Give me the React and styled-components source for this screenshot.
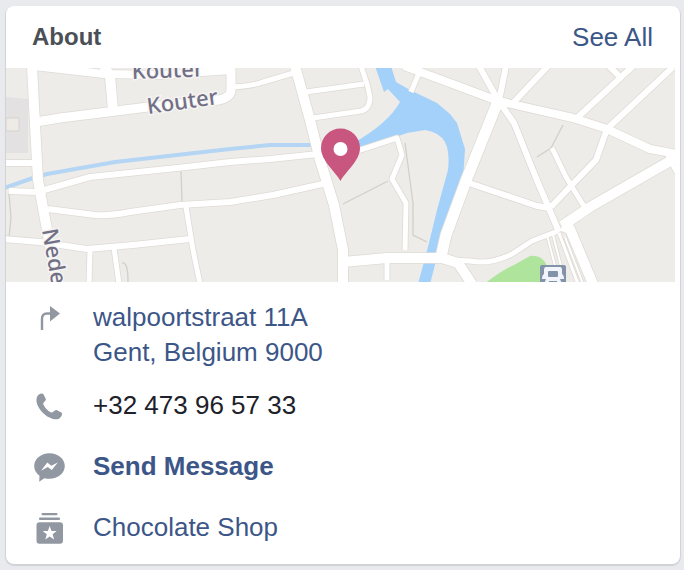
import styled, { createGlobalStyle } from "styled-components";

const GlobalStyle = createGlobalStyle`
  * {
    box-sizing: border-box;
  }
  body {
    margin: 0;
    background-color: #e9eaee;
    font-family: "Liberation Sans", Arial, Helvetica, sans-serif;
  }
`;

const Page = styled.main`
  padding: 6px 4px 6px 6px;
`;

const Card = styled.section`
  background-color: white;
  border-radius: 8px;
  box-shadow: 0 1px 1px 1px #d0d2d7;
  overflow: hidden;
`;

const Header = styled.header`
  display: flex;
  align-items: center;
  justify-content: space-between;
  height: 62px;
  padding: 0 27px 0 26px;
`;

const Title = styled.h2`
  margin: 0;
  font-size: 24px;
  font-weight: 700;
  color: #4b4f56;
`;

const Link = styled.a`
  font-size: 26px;
  line-height: 35px;
  font-weight: ${(props) => (props.$strong ? 700 : 400)};
  color: #3c5688;
  text-decoration: none;
`;

const Map = styled.svg`
  display: block;
  width: calc(100% - 5px);
  height: 214px;
`;

const Label = styled.text`
  font-family: "Noto Sans", sans-serif;
  font-size: 22px;
  font-weight: 500;
  fill: #716f86;
  stroke: #f6f4f2;
  stroke-width: 3px;
  paint-order: stroke;
`;

const List = styled.ul`
  margin: 0;
  padding: 5px 0 6px;
  list-style: none;
`;

const Row = styled.li`
  display: flex;
  gap: 27px;
  padding: 13px 28px;
  padding-bottom: ${(props) => (props.$tight ? 5 : 13)}px;
  font-size: 26px;
  line-height: 35px;
`;

const Icon = styled.svg`
  flex-shrink: 0;
  width: 32px;
  height: 35px;
  fill: #9298a2;
`;

const Phone = styled.span`
  color: #1d2129;
`;

const roads = [
  { w: 10, d: "M32 66 L35 125 L38 180 L43 208 L57 284" },
  { w: 9, d: "M36 122 L60 118 L100 113 L148 107 L190 103 L219 100 Q231 97 231 90 V66" },
  { w: 10, d: "M104 66 L110 76 L113 110" },
  { w: 8, d: "M34 66 L104 74 L160 75 L231 70" },
  { w: 6, d: "M4 163 H34" },
  { w: 6, d: "M9 191 L37 192 L90 177 L177 168 L230 162 L270 159 L318 154" },
  { w: 6, d: "M48 209 L95 215 Q110 216 130 212 L180 205 L230 202 L273 195 L327 183" },
  { w: 6, d: "M4 239 L40 242 L87 249 L133 245 L190 239" },
  { w: 5, d: "M90 249 L89 284" },
  { w: 5, d: "M114 248 L119 284" },
  { w: 5, d: "M186 207 L193 250 L200 284" },
  { w: 10, d: "M295 66 L310 120 L320 160 L334 205 L343 250 V284" },
  { w: 5, d: "M233 87 Q252 86 263 82 L297 72" },
  { w: 5, d: "M306 92 L364 84" },
  { w: 5, d: "M361 66 L367 84 L370 97 Q370 109 361 111 L313 118" },
  { w: 5, d: "M354 152 L397 138 L402 155 L392 179 L406 203 L405 250" },
  { w: 10, d: "M343 262 L387 258 L442 258 L458 263 L472 284" },
  { w: 5, d: "M387 258 V280" },
  { w: 8, d: "M404 66 L450 83 L498 101 L573 118 L607 129 L650 149 L677 154" },
  { w: 5, d: "M419 73 L411 92" },
  { w: 6, d: "M479 66 L498 100" },
  { w: 6, d: "M506 66 L499 101" },
  { w: 6, d: "M548 66 L514 102" },
  { w: 6, d: "M609 66 L621 78" },
  { w: 6, d: "M633 66 L577 118" },
  { w: 6, d: "M673 67 L608 128" },
  { w: 11, d: "M498 101 L467 178 L446 235 L441 257" },
  { w: 6, d: "M500 103 L514 123 L536 178 L559 232" },
  { w: 6, d: "M607 129 L596 160 L567 190 L551 207" },
  { w: 5, d: "M552 148 L566 177 L585 208" },
  { w: 6, d: "M469 183 L537 206 L550 208" },
  { w: 10, d: "M562 226 L590 207 L677 157" },
  { w: 10, d: "M562 226 L570 229 L593 284" },
  { w: 5, d: "M558 231 L532 241 L512 254 Q490 265 470 261 L450 260" },
  { w: 4, d: "M667 154 L677 174" },
  { w: 2, d: "M547 235 L555 266" },
  { w: 2, d: "M553 235 L561 266" },
  { w: 3, d: "M559 233 L578 284" },
  { w: 2, d: "M565 237 L583 284" },
];

const paths = [
  "M181 171 L182 202",
  "M343 204 L388 181",
  "M405 143 L413 203 V235 L427 242",
  "M563 125 L551 148 L537 157",
  "M9 193 L11 218 L9 238",
  "M122 263 Q128 261 128 282",
];

function AboutMap() {
  return (
    <Map
      viewBox="6 68 669 214"
      preserveAspectRatio="xMidYMid slice"
      role="img"
      aria-label="Map of Gent"
    >
      <rect x="-400" y="68" width="1500" height="214" fill="#eeece8" />
      {/* buildings and park */}
      <path d="M6 97 L28 99 V153 H6 Z" fill="#e3e1e1" />
      <path d="M6 118 H19 V131 H6 Z" fill="#eeebe6" stroke="#d5d2d0" />
      <path
        d="M484 284 Q504 269 514 265 L530 256 Q542 254 547 266 V284 Z"
        fill="#afe49d"
      />
      {/* footpaths */}
      {paths.map((d) => (
        <path key={d} d={d} fill="none" stroke="#d3cfcb" strokeWidth="1.3" />
      ))}
      {/* water */}
      <path
        d="M4 188 L33 178 L47 174 L115 162 L230 149 L270 145 L312 145"
        fill="none"
        stroke="#b4d5f3"
        strokeWidth="4"
      />
      <path
        d="M375 66 L384 92 L388 89 L400 102 Q388 124 350 145 L354 152 L407 133 L425 130 Q439 132 445 142 Q450 152 448 170 L437 210 L428 247 L418 284 L430 284 L438 253 L450 225 L463 180 L465 149 L457 123 L450 114 L437 103 L410 90 L396 82 L391 66 Z"
        fill="#a3d1fa"
      />
      {/* road edges go under every road so crossings stay open */}
      {roads.map((road) => (
        <path
          key={road.d}
          d={road.d}
          fill="none"
          stroke="#dedbd6"
          strokeWidth={road.w + 1.6}
          strokeLinejoin="round"
        />
      ))}
      {roads.map((road) => (
        <path
          key={road.d}
          d={road.d}
          fill="none"
          stroke="white"
          strokeWidth={road.w}
          strokeLinejoin="round"
        />
      ))}
      <Label transform="translate(132 79) rotate(-2)">Kouter</Label>
      <Label transform="translate(148 114) rotate(-8)">Kouter</Label>
      <Label transform="translate(42 230) rotate(80)">Nede</Label>
      {/* station */}
      <rect x="540" y="265" width="26" height="24" rx="2" fill="#8292a9" />
      <path
        d="M546 267 H560 Q562 267 562 270 V274 Q564 275 564 279 H560 L562 284 H544 L546 279 H542 Q542 275 544 274 V270 Q544 267 546 267 Z"
        fill="#f1f4fa"
      />
      <rect x="548" y="271" width="10" height="6" rx="1" fill="#8292a9" />
      <path d="M549 281 H557 V284 H549 Z" fill="#8292a9" />
      {/* pin */}
      <path
        d="M340.500 181 C336 172 321 161 321 148 A19.500 19.500 0 0 1 360 148 C360 161 345 172 340.500 181 Z"
        fill="#c9567f"
      />
      <circle cx="340.500" cy="149" r="7" fill="white" />
    </Map>
  );
}

const App = () => {
  return (
    <Page>
      <GlobalStyle />
      <Card>
        <Header>
          <Title>About</Title>
          <Link href="#about">See All</Link>
        </Header>
        <AboutMap />
        <List>
          <Row $tight>
            <Icon viewBox="0 0 32 35" aria-hidden="true">
              <path
                d="M8 30 V19 Q8 13.500 13 13.500 H18"
                fill="none"
                stroke="#9298a2"
                strokeWidth="2.400"
              />
              <path d="M16 6 L26 13.500 L16 21.500 Z" />
            </Icon>
            <Link href="#map">
              walpoortstraat 11A
              <br />
              Gent, Belgium 9000
            </Link>
          </Row>
          <Row>
            <Icon viewBox="0 0 32 35" aria-hidden="true">
              <path d="M3 9 C4 7 5.500 5.500 8 5.500 Q9 5.500 9.600 6.600 L11.800 11 C12.300 13 9.200 14 9.200 16 C10.500 19.500 14 23.200 17.500 24.600 C19.500 24.600 20.500 21.600 22.500 22 L27.300 24.600 Q28.500 25.300 28 26.600 C27.400 28.800 26 30.300 24.500 31 C20.500 32.300 14 30 8.500 24.500 C3 18.500 1.500 13 3 9 Z" />
            </Icon>
            <Phone>+32 473 96 57 33</Phone>
          </Row>
          <Row>
            <Icon viewBox="0 0 32 35" aria-hidden="true">
              <path d="M15.500 4.300 C7 4.300 0.200 10 0.200 17 C0.200 21 2.300 24.500 5.500 26.800 L5.200 32.700 L10.300 29.200 C12 29.600 13.700 29.800 15.500 29.800 C24 29.800 30.800 24 30.800 17 C30.800 10 24 4.300 15.500 4.300 Z" />
              <path
                d="M7 21.700 L13.300 13.500 L17.300 16.700 L23.800 13.500 L17.800 21 L13.700 18 Z"
                fill="white"
              />
            </Icon>
            <Link href="#message" $strong>
              Send Message
            </Link>
          </Row>
          <Row>
            <Icon viewBox="0 0 32 35" aria-hidden="true">
              <rect x="7.500" y="3" width="16" height="2.300" rx="1" />
              <rect x="5" y="7.600" width="21" height="2.300" rx="1" />
              <rect x="2.500" y="12.200" width="26.500" height="21.600" rx="3" />
              <path
                d="M15.700 16 L17.500 21 L22.700 21.100 L18.600 24.300 L20.100 29.400 L15.700 26.400 L11.300 29.400 L12.800 24.300 L8.700 21.100 L13.900 21 Z"
                fill="white"
              />
            </Icon>
            <Link href="#category">Chocolate Shop</Link>
          </Row>
        </List>
      </Card>
    </Page>
  );
};

export default App;
